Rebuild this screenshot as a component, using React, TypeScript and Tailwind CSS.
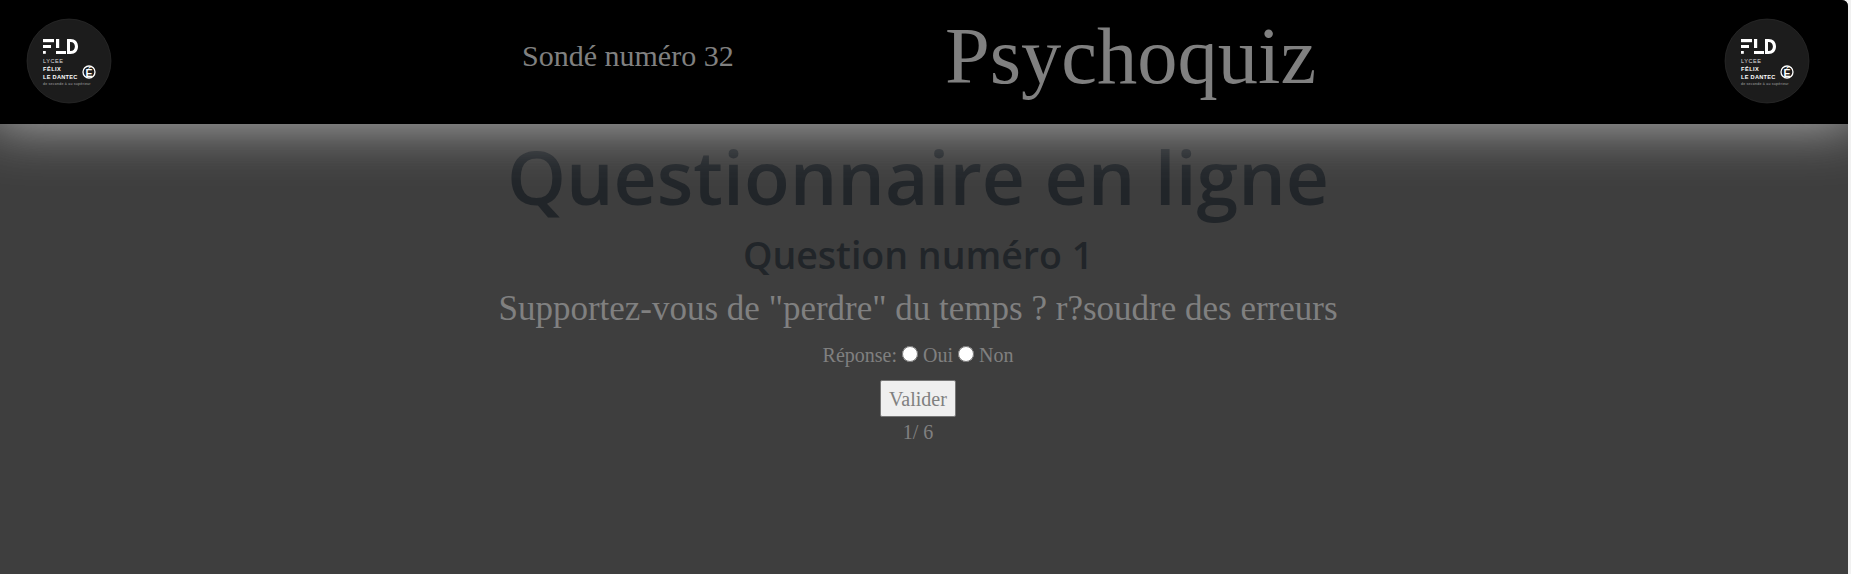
const Logo = () => (
  <svg width="86" height="86" viewBox="0 0 86 86" className="shrink-0 -mt-[2px]">
    <circle cx="43" cy="43" r="42" fill="#1c1c1c" stroke="#333" strokeWidth="0.6" />
    <g fill="#fff">
      <rect x="17" y="21" width="11" height="3.200" />
      <rect x="17" y="27" width="8" height="3" />
      <rect x="17" y="33" width="2.800" height="2.800" />
      <rect x="30" y="21" width="3.200" height="9" />
      <rect x="30" y="33" width="10" height="3" />
      <path fillRule="evenodd" d="M41 21h3.500c4.800 0 7.500 3 7.500 7.500S49.300 36 44.500 36H41zM44 24v9h.500c2.800 0 4.400-1.800 4.400-4.500S47.300 24 44.500 24z" />
    </g>
    <text x="17" y="45" fill="#ddd" fontSize="5.600" letterSpacing="0.5" fontFamily="Liberation Sans, sans-serif">LYCEE</text>
    <text x="17" y="53" fill="#fff" fontSize="5.600" fontWeight="700" letterSpacing="0.5" fontFamily="Liberation Sans, sans-serif">FÉLIX</text>
    <text x="17" y="60.500" fill="#fff" fontSize="5.600" fontWeight="700" letterSpacing="0.3" fontFamily="Liberation Sans, sans-serif">LE DANTEC</text>
    <text x="17" y="67" fill="#aaa" fontSize="3.500" letterSpacing="0.25" fontFamily="Liberation Sans, sans-serif">de seconde à au supérieur</text>
    <circle cx="63" cy="54" r="6" fill="none" stroke="#fff" strokeWidth="1.300" />
    <text x="63" y="58.500" textAnchor="middle" fill="#fff" fontSize="10.500" fontWeight="700" fontFamily="Liberation Sans, sans-serif">É</text>
  </svg>
);

export default function App() {
  return (
    <div className="min-h-screen bg-[#f1f1f1] font-['Liberation_Serif',serif] text-[16px] text-[#808080]">
      <div className="min-h-[574px] bg-[#3e3e3e] mr-[3px] rounded-tr-[6px] overflow-hidden">
        <header className="relative z-10 h-[124px] bg-black flex items-center pl-[26px] pr-[38px] shadow-[0_-10px_56px_10px_#b8b8b8]">
          <Logo />
          <div className="ml-[410px] w-[211px] text-[30px] leading-[34px] mt-[-12px] whitespace-nowrap">Sondé numéro 32</div>
          <div className="ml-[212px] text-[80.5px] leading-[92px] mt-[-13px] whitespace-nowrap">Psychoquiz</div>
          <div className="flex-1" />
          <Logo />
        </header>
        <main className="flex flex-col items-center text-center pr-[12px] pt-[7px]">
          <h1 className="font-['Open_Sans',sans-serif] font-semibold text-[75px] leading-[90px] text-[#212529]">Questionnaire en ligne</h1>
          <h2 className="font-['Open_Sans',sans-serif] font-semibold text-[37.5px] leading-[45px] text-[#212529] mt-[11px]">Question numéro 1</h2>
          <h3 className="text-[35px] leading-[40px] mt-[12px]">Supportez-vous de "perdre" du temps ? r?soudre des erreurs</h3>
          <div className="flex items-center text-[20px] leading-[23px] mt-[15px]">
            <span>Réponse:</span>
            <input type="radio" name="reponse" className="w-[16px] h-[16px] ml-[5px] mr-[5px] -mt-[4px] accent-white" />
            <span>Oui</span>
            <input type="radio" name="reponse" className="w-[16px] h-[16px] ml-[5px] mr-[5px] -mt-[4px] accent-white" />
            <span>Non</span>
          </div>
          <button className="mt-[13px] w-[76px] h-[37px] bg-[#efefef] border border-[#767676] rounded-[2px] text-[20px] text-[#808080]">Valider</button>
          <div className="text-[20px] leading-[23px] mt-[4px]">1/ 6</div>
        </main>
      </div>
    </div>
  );
}
